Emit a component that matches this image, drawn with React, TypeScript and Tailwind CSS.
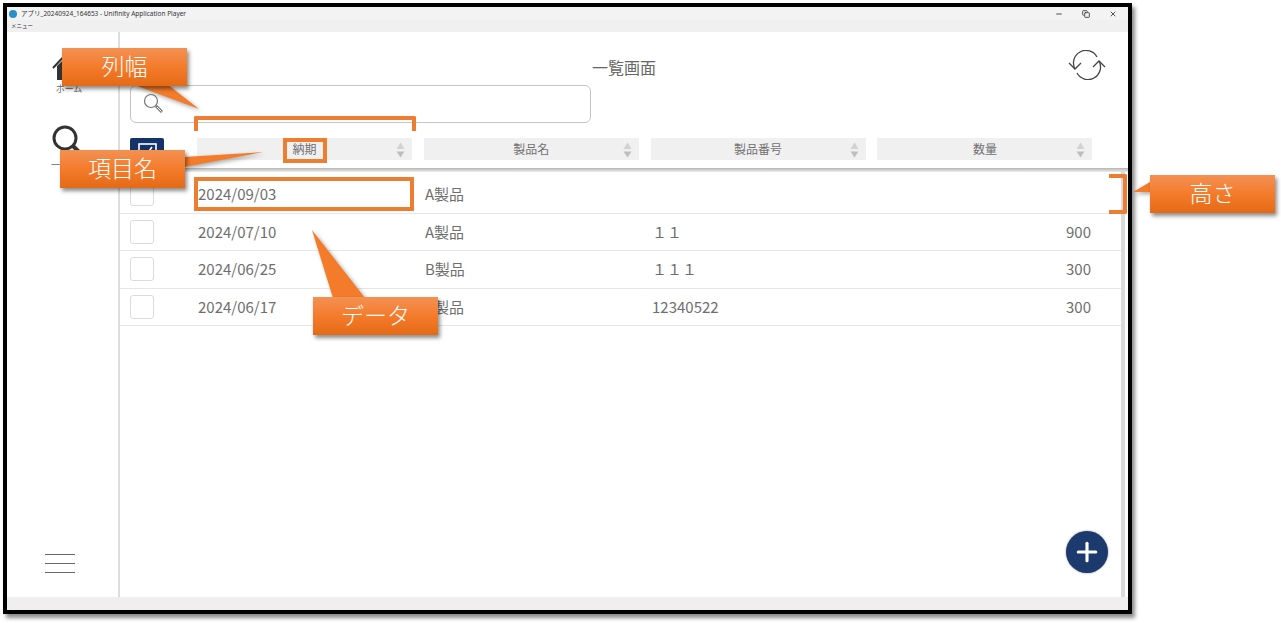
import { Plus, X, Minus, Copy } from 'lucide-react'

const font = { fontFamily: '"Noto Sans", "Noto Sans CJK JP", sans-serif' }

const columns = ['納期', '製品名', '製品番号', '数量']

const rows = [
  { date: '2024/09/03', name: 'A製品', no: '', qty: '' },
  { date: '2024/07/10', name: 'A製品', no: '１１', qty: '900' },
  { date: '2024/06/25', name: 'B製品', no: '１１１', qty: '300' },
  { date: '2024/06/17', name: 'A製品', no: '12340522', qty: '300' },
]

function HeaderCell({ label }: { label: string }) {
  return (
    <div className="relative flex h-[22px] w-[215px] items-center justify-center bg-[#f0f0f0] pt-[2px] text-[12px] text-[#707070]">
      <span>{label}</span>
      <svg className="absolute right-[7px] top-[4px]" width="9" height="16" viewBox="0 0 9 16">
        <path d="M4.5 0.5 8.5 7H0.5Z" fill="#d2d2d2" />
        <path d="M4.5 15.5 8.5 9.5H0.5Z" fill="#bebebe" />
      </svg>
    </div>
  )
}

function Callout({ className, label }: { className: string; label: string }) {
  return (
    <div
      className={`absolute flex h-[38px] w-[125px] items-center justify-center bg-gradient-to-b from-[#f39152] via-[#f47b2a] to-[#e56a16] pb-[2px] text-[23px] font-extralight text-white shadow-[2px_3px_4px_rgba(0,0,0,0.45)] ${className}`}
    >
      {label}
    </div>
  )
}

export default function App() {
  return (
    <div className="relative h-[623px] w-[1281px] overflow-hidden bg-white" style={font}>
      <div className="ml-[3px] mt-[3px] flex h-[611px] w-[1129px] flex-col border-4 border-black shadow-[3px_4px_4px_rgba(0,0,0,0.45)]">
        {/* title bar */}
        <div className="flex h-[13px] items-center bg-[#f3f3f3] pl-[2px] text-[6.5px] text-[#333333]">
          <span className="flex h-[8px] w-[8px] rounded-full bg-[#2a8fc4]" />
          <span className="ml-[4px]">アプリ_20240924_164653 - Unifinity Application Player</span>
          <div className="ml-auto flex items-center gap-[19px] pr-[11px] text-[#333333]">
            <Minus size={8} strokeWidth={2.5} />
            <Copy size={8} strokeWidth={2.5} />
            <X size={8} strokeWidth={2.5} />
          </div>
        </div>
        <div className="flex h-[12px] items-center bg-[#f0f0f0] pl-[4px] text-[5.5px] text-[#333333]">メニュー</div>

        <div className="flex flex-1">
          {/* sidebar */}
          <div className="flex w-[113px] flex-col border-r-2 border-[#dddddd] pl-[42px]">
            <div className="mt-[18px] flex w-[40px] flex-col items-center">
              <svg width="36" height="32" viewBox="0 0 36 32">
                <path d="M18 1 2 18" fill="none" stroke="#333333" strokeWidth="2" />
                <path d="M6 16 18 4l12 12v14H6Z" fill="#333333" />
              </svg>
              <span className="mt-[1px] text-[9px] leading-[12px] text-[#666666]">ホーム</span>
            </div>
            <div className="mt-[30px] flex w-[40px] flex-col items-center">
              <svg width="36" height="32" viewBox="0 0 36 32" fill="none" stroke="#333333">
                <circle cx="14" cy="13" r="11" strokeWidth="3" />
                <path d="M22 21 33 32" strokeWidth="4" />
              </svg>
              <span className="mt-[2px] text-[9px] leading-[12px] text-[#666666]">一覧画面</span>
            </div>
            <div className="-ml-[4px] mb-[24px] mt-auto flex w-[30px] flex-col gap-[8px]">
              <span className="h-[1px] bg-[#666666]" />
              <span className="h-[1px] bg-[#666666]" />
              <span className="h-[1px] bg-[#666666]" />
            </div>
          </div>

          {/* main */}
          <div className="relative flex flex-1 flex-col">
            <div className="flex h-[53px] items-center justify-center pt-[18px] text-[16px] text-[#666666]">一覧画面</div>
            <div className="ml-[10px] flex h-[38px] w-[461px] items-center rounded-[6px] border border-[#c4c4c4] pl-[12px]">
              <svg width="22" height="22" viewBox="0 0 22 22" fill="none">
                <circle cx="8" cy="8" r="6.5" stroke="#777777" strokeWidth="1.2" />
                <path d="M13 13 19 19" stroke="#777777" strokeWidth="3" />
                <path d="M14 14 18.5 18.5" stroke="#ffffff" strokeWidth="1" />
              </svg>
            </div>

            <div className="mt-[15px] flex items-center pl-[10px]">
              <div className="flex h-[22px] w-[34px] items-start justify-center overflow-hidden rounded-t-[2px] bg-[#14336b] pt-[5px]">
                <svg className="shrink-0" width="19" height="17" viewBox="0 0 19 17" fill="none" stroke="#ffffff" strokeWidth="1.6">
                  <rect x="1" y="1" width="17" height="15" />
                  <path d="M5 8 8.5 12 14 4" />
                </svg>
              </div>
              <div className="ml-[33px] flex gap-[11.8px]">
                {columns.map((c) => (
                  <HeaderCell key={c} label={c} />
                ))}
              </div>
            </div>

            <div className="mt-[8px] h-[4px] bg-gradient-to-b from-[#b4b4b4] to-[#eeeeee]" />
            <div className="mt-[4px] flex flex-col pr-[6px]">
              {rows.map((r) => (
                <div
                  key={r.date}
                  className="flex h-[37.5px] items-center border-b border-[#e6e6e6] pl-[10px] text-[15px] text-[#6e6e6e]"
                  style={{ fontFamily: '"Noto Sans CJK JP", sans-serif' }}
                >
                  <div className="h-[24px] w-[24px] rounded-[3px] border border-[#dcdcdc]" />
                  <div className="ml-[44px] w-[227px]">{r.date}</div>
                  <div className="w-[227px]">{r.name}</div>
                  <div className="w-[227px]">{r.no}</div>
                  <div className="w-[212px] text-right">{r.qty}</div>
                </div>
              ))}
            </div>

            {/* scrollbar */}
            <div className="absolute bottom-0 right-[3px] top-[138px] w-[4px] bg-[#dadada]" />

            <button className="absolute bottom-[24px] right-[20px] flex h-[42px] w-[42px] items-center justify-center rounded-full bg-[#1c3a6e] shadow-[0_0_2px_rgba(0,0,0,0.5)]">
              <Plus size={30} strokeWidth={2.5} className="text-white" />
            </button>
          </div>
        </div>

        <div className="h-[13px] bg-[#f0eeee]" />
      </div>

      {/* annotations */}
      <svg className="absolute left-0 top-0 drop-shadow-[2px_2px_2px_rgba(0,0,0,0.35)]" width="1281" height="623" viewBox="0 0 1281 623">
        <path d="M132 84 199 109 167 84Z" fill="#f47b2a" />
        <path d="M184 157 263 152 184 167Z" fill="#f47b2a" />
        <path d="M333 298 312 230 365 298Z" fill="#f47b2a" />
        <path d="M1150 182 1133 192 1150 192Z" fill="#f47b2a" />
      </svg>
      <Callout className="left-[62px] top-[48px]" label="列幅" />
      <Callout className="left-[60px] top-[150px]" label="項目名" />
      <Callout className="left-[313px] top-[297px]" label="データ" />
      <Callout className="left-[1150px] top-[175px]" label="高さ" />

      <div className="absolute left-[194px] top-[116px] h-[15px] w-[222px] rounded-t-[2px] border-x-4 border-t-4 border-[#ed7d31]" />
      <div className="absolute left-[283px] top-[138px] h-[25px] w-[44px] border-4 border-[#ed7d31]" />
      <div className="absolute left-[194px] top-[177px] h-[34px] w-[220px] border-4 border-[#ed7d31]" />
      <div className="absolute left-[1109px] top-[174px] h-[40px] w-[18px] rounded-r-[2px] border-y-4 border-r-4 border-[#ed7d31]" />

      <svg className="absolute left-[1068px] top-[50px]" width="38" height="30" viewBox="0 0 38 30" fill="none" stroke="#444444" strokeWidth="1.3">
        <path d="M7 19A12.5 12.5 0 0 1 29 7" />
        <path d="M31 11A12.5 12.5 0 0 1 9 23" />
        <path d="M1 13 7 19 13 13" />
        <path d="M25 17 31 11 37 17" />
      </svg>
    </div>
  )
}
